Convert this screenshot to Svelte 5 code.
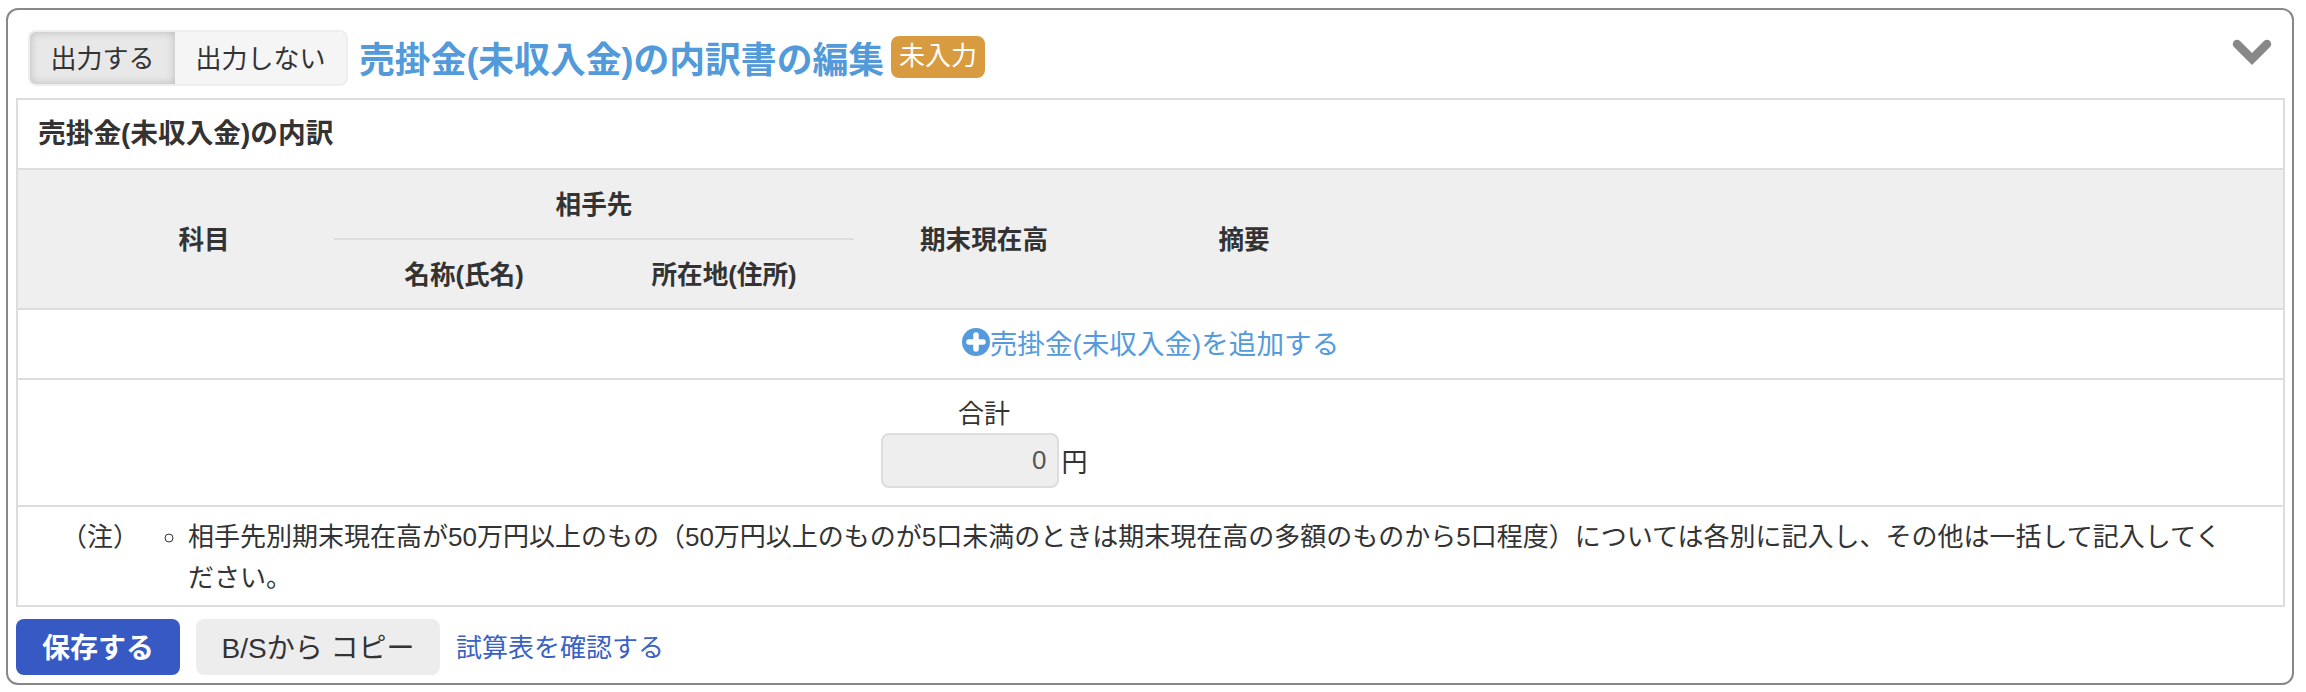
<script>
	const columns = [56, 260, 260, 260, 260, 260];
	let output = $state(true);
	let total = $state(0);
</script>

<section class="panel">
	<header class="head">
		<div class="toggle">
			<button type="button" class:active={output} onclick={() => (output = true)}>出力する</button>
			<button type="button" class:active={!output} onclick={() => (output = false)}>出力しない</button>
		</div>
		<h2>売掛金(未収入金)の内訳書の編集</h2>
		<span class="badge">未入力</span>
		<svg class="chevron" viewBox="0 0 40 26" width="40" height="26" aria-hidden="true">
			<path d="M5 5 L20 20 L35 5" fill="none" stroke="#888" stroke-width="8.5" stroke-linecap="round" stroke-linejoin="miter" />
		</svg>
	</header>

	<div class="box">
		<h3>売掛金(未収入金)の内訳</h3>
		<table>
			<colgroup>
				{#each columns as w}
					<col style="width: {w}px" />
				{/each}
				<col />
			</colgroup>
			<thead>
				<tr class="top">
					<th rowspan="2"></th>
					<th rowspan="2">科目</th>
					<th colspan="2" class="group">相手先</th>
					<th rowspan="2">期末現在高</th>
					<th rowspan="2">摘要</th>
					<th rowspan="2"></th>
				</tr>
				<tr class="bottom">
					<th>名称(氏名)</th>
					<th>所在地(住所)</th>
				</tr>
			</thead>
			<tbody>
				<tr class="add">
					<td colspan="7">
						<a href="#add">
							<svg viewBox="0 0 28 28" width="28" height="28" aria-hidden="true">
								<circle cx="14" cy="14" r="14" fill="#559bdc" />
								<path d="M14 7 V21 M7 14 H21" stroke="#fff" stroke-width="5.5" stroke-linecap="round" />
							</svg>売掛金(未収入金)を追加する</a>
					</td>
				</tr>
				<tr class="sum">
					<td colspan="4"></td>
					<td>
						<div class="sum-label">合計</div>
						<div class="sum-field"><input type="text" readonly value={total} /><span>円</span></div>
					</td>
					<td colspan="2"></td>
				</tr>
			</tbody>
		</table>
		<div class="note">
			<div class="note-label">（注）</div>
			<ul>
				<li>相手先別期末現在高が50万円以上のもの（50万円以上のものが5口未満のときは期末現在高の多額のものから5口程度）については各別に記入し、その他は一括して記入してください。</li>
			</ul>
		</div>
	</div>

	<footer class="actions">
		<button type="button" class="save">保存する</button>
		<button type="button" class="copy">B/Sから コピー</button>
		<a href="#trial">試算表を確認する</a>
	</footer>
</section>

<style>
	:global(body) {
		margin: 0;
		background: #fff;
		color: #333;
		font-family: "Liberation Sans", "Noto Sans CJK JP", sans-serif;
		font-size: 26px;
	}
	.panel {
		margin: 8px 12px 0 6px;
		padding: 20px 7px 9px 8px;
		border: 2px solid #888;
		border-radius: 12px;
		height: 677px;
		box-sizing: border-box;
	}
	.head {
		display: flex;
		align-items: center;
		height: 56px;
		margin-bottom: 12px;
		padding-left: 12px;
	}
	.toggle {
		display: flex;
		border: 2px solid #eee;
		border-radius: 8px;
		background: #f6f5f6;
		overflow: hidden;
	}
	.toggle button {
		height: 52px;
		padding: 0 20.5px 3px;
		border: 0;
		background: transparent;
		color: #333;
		font: inherit;
	}
	.toggle button.active {
		background: #e9e8e9;
		box-shadow: inset 0 0 10px rgba(0, 0, 0, 0.2);
	}
	h2 {
		margin: 0 0 2px 11px;
		color: #529ad9;
		font-size: 35.8px;
		font-weight: bold;
	}
	.badge {
		margin: 0 0 3px 7px;
		padding: 0 8px;
		height: 42px;
		line-height: 40px;
		border-radius: 8px;
		background: #d99b3f;
		color: #fff;
	}
	.chevron {
		margin-left: auto;
		margin-right: 13px;
		margin-bottom: 12px;
	}
	.box {
		border: 2px solid #ddd;
		border-top-width: 2px;
	}
	h3 {
		margin: 0;
		height: 68px;
		padding-left: 20px;
		line-height: 68px;
		font-size: 27.7px;
		font-weight: bold;
	}
	table {
		width: 100%;
		table-layout: fixed;
		border-collapse: collapse;
	}
	thead {
		background: #efefef;
	}
	th {
		padding: 0 0 4px;
		font-size: 25.6px;
		font-weight: bold;
		text-align: center;
	}
	thead tr.top {
		height: 70px;
	}
	thead tr.bottom {
		height: 70px;
	}
	thead th {
		border-top: 2px solid #ddd;
		border-bottom: 2px solid #ddd;
	}
	tr.top th.group {
		border-bottom: 2px solid #ddd;
	}
	tr.bottom th {
		border-top: 0;
	}
	td {
		padding: 0;
	}
	tr.add td {
		height: 70px;
		padding-bottom: 4px;
		box-sizing: border-box;
		text-align: center;
		border-bottom: 2px solid #ddd;
	}
	tr.add a {
		display: inline-flex;
		align-items: center;
		color: #559bdc;
		font-size: 27.6px;
		text-decoration: none;
	}
	tr.sum td {
		height: 125px;
		text-align: center;
		vertical-align: top;
		border-bottom: 2px solid #ddd;
	}
	.sum-label {
		padding-top: 16px;
		padding-bottom: 1px;
		line-height: 36px;
	}
	.sum-field {
		display: flex;
		align-items: center;
		justify-content: center;
		gap: 3px;
	}
	.sum-field input {
		width: 178px;
		height: 55px;
		box-sizing: border-box;
		padding: 0 10px;
		border: 2px solid #ddd;
		border-radius: 8px;
		background: #eee;
		color: #555;
		font: inherit;
		text-align: right;
	}
	.note {
		display: flex;
		height: 98px;
		line-height: 41px;
		padding-top: 10px;
		box-sizing: border-box;
	}
	.note-label {
		width: 152px;
		padding-left: 43px;
		box-sizing: border-box;
		flex: none;
	}
	ul {
		margin: 0;
		padding: 0 50px 0 18px;
		list-style: circle;
	}
	.actions {
		display: flex;
		align-items: center;
		gap: 16px;
		margin-top: 12px;
	}
	.actions button {
		height: 56px;
		padding-bottom: 4px;
		border: 0;
		border-radius: 8px;
		font: inherit;
		font-size: 28px;
	}
	.save {
		width: 164px;
		background: #3659c4;
		color: #fff;
		font-weight: bold !important;
	}
	.copy {
		width: 244px;
		background: #eeedee;
		color: #333;
	}
	.actions a {
		margin-bottom: 4px;
		color: #3a62c4;
		text-decoration: none;
	}
</style>
